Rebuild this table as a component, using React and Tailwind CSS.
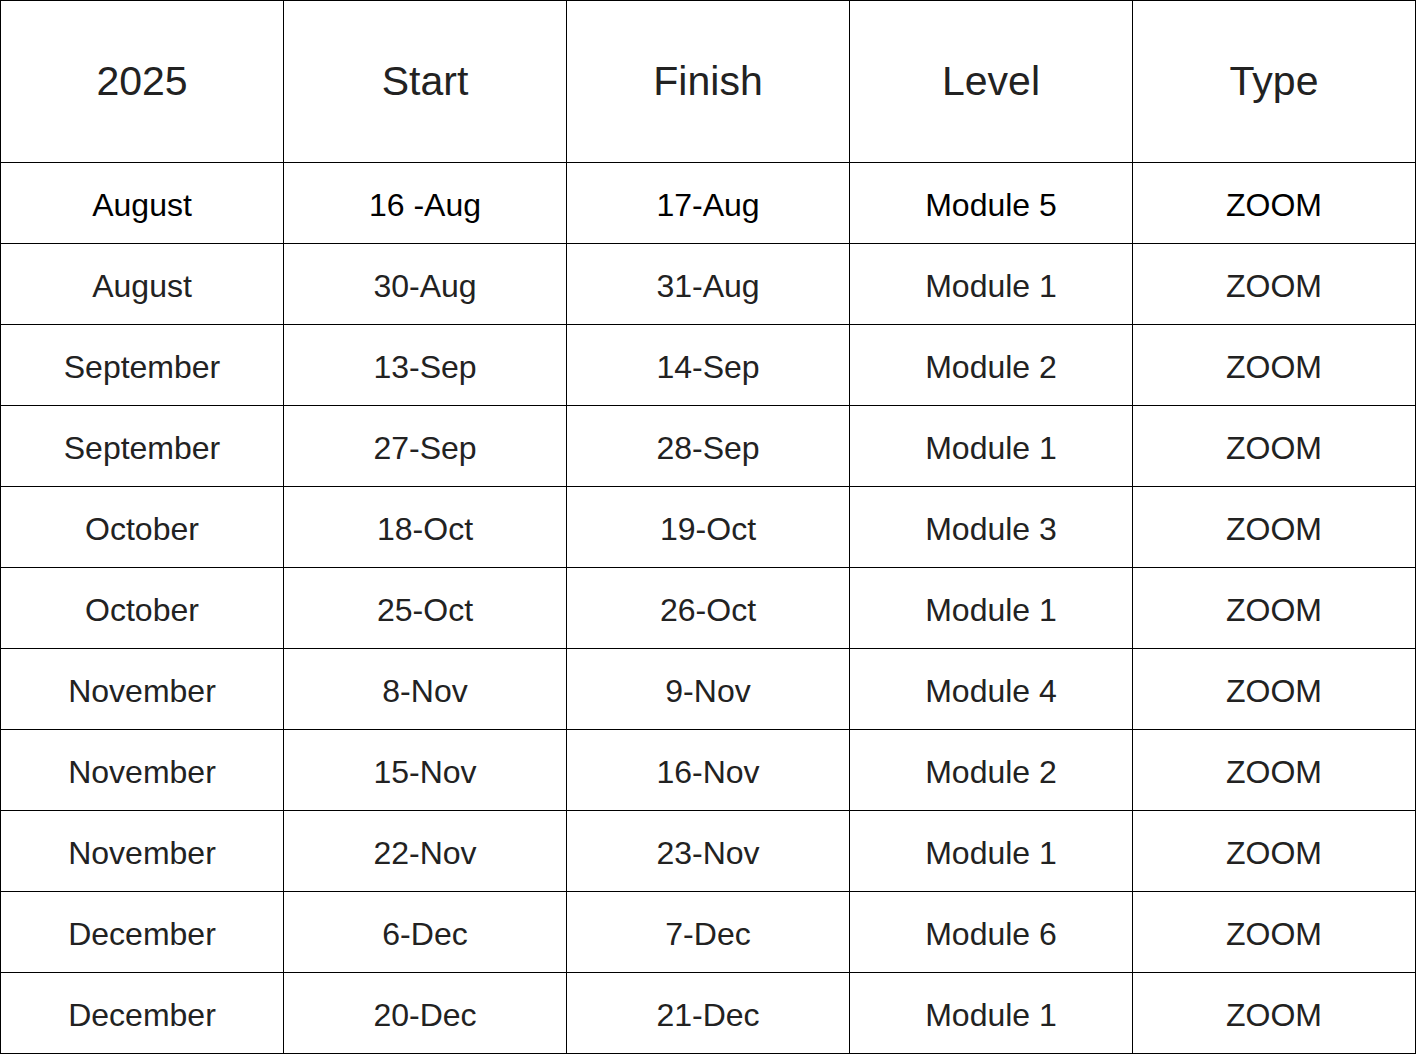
import React from "react";

const rows = [
  ["August", "16 -Aug", "17-Aug", "Module 5", "ZOOM"],
  ["August", "30-Aug", "31-Aug", "Module 1", "ZOOM"],
  ["September", "13-Sep", "14-Sep", "Module 2", "ZOOM"],
  ["September", "27-Sep", "28-Sep", "Module 1", "ZOOM"],
  ["October", "18-Oct", "19-Oct", "Module 3", "ZOOM"],
  ["October", "25-Oct", "26-Oct", "Module 1", "ZOOM"],
  ["November", "8-Nov", "9-Nov", "Module 4", "ZOOM"],
  ["November", "15-Nov", "16-Nov", "Module 2", "ZOOM"],
  ["November", "22-Nov", "23-Nov", "Module 1", "ZOOM"],
  ["December", "6-Dec", "7-Dec", "Module 6", "ZOOM"],
  ["December", "20-Dec", "21-Dec", "Module 1", "ZOOM"],
];

const headers = ["2025", "Start", "Finish", "Level", "Type"];

export default function App() {
  return (
    <div className="bg-white min-h-[1055px] w-[1417px]" style={{ fontFamily: '"Liberation Sans", Arial, sans-serif' }}>
      <div className="grid grid-cols-[repeat(5,283px)] w-[1416px] border-l border-t border-black">
        {headers.map((h) => (
          <div key={h} className="h-[162px] border-r border-b border-black flex items-center justify-center text-[41px] text-[#222]">
            {h}
          </div>
        ))}
        {rows.map((r, i) =>
          r.map((c, j) => (
            <div
              key={i + "-" + j}
              className={
                i === 0
                  ? "h-[81px] pt-[3px] border-r border-b border-black flex items-center justify-center text-[32px] text-black"
                  : "h-[81px] pt-[3px] border-r border-b border-black flex items-center justify-center text-[32px] text-[#222]"
              }
            >
              {c}
            </div>
          ))
        )}
      </div>
    </div>
  );
}
